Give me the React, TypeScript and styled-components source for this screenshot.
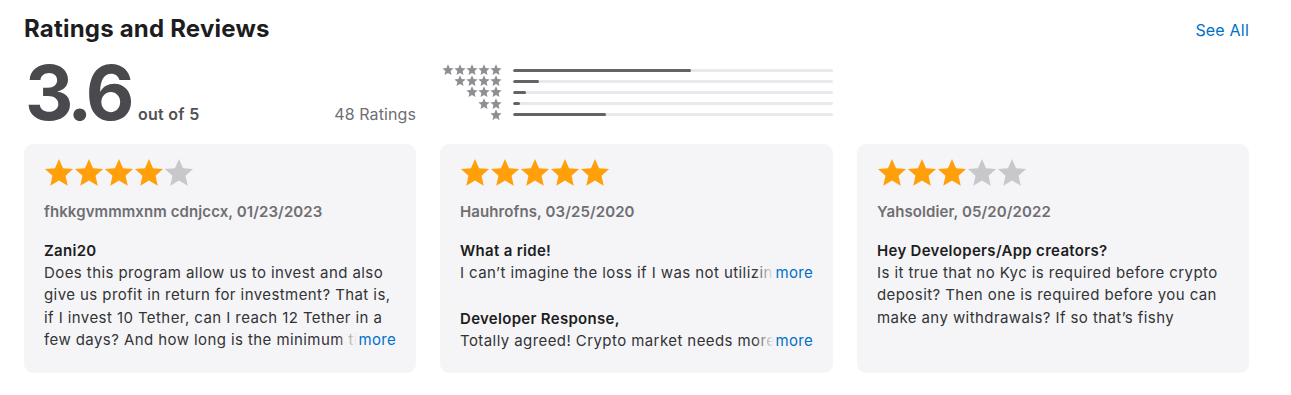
import styled, { createGlobalStyle } from "styled-components";

const GlobalStyle = createGlobalStyle`
  body {
    margin: 0;
    background: #fff;
    font-family: Inter, "Noto Sans", "Liberation Sans", sans-serif;
    -webkit-font-smoothing: antialiased;
  }
`;

const Section = styled.section`
  width: 1225px;
  padding: 13px 0 0 24px;
  display: flex;
  flex-direction: column;
`;

const Header = styled.div`
  display: flex;
  justify-content: space-between;
  align-items: center;
  height: 32px;
`;

const Title = styled.h2`
  margin: 0;
  font-size: 24px;
  line-height: 32px;
  font-weight: 700;
  color: #1d1d1f;
  letter-spacing: 0.2px;
`;

const SeeAll = styled.a`
  font-size: 16px;
  color: #0070c9;
  text-decoration: none;
  cursor: pointer;
  letter-spacing: 0.2px;
  margin-top: 2px;
`;

const Summary = styled.div`
  display: grid;
  grid-template-columns: 392px 393px;
  gap: 24px;
  margin-top: 18px;
  height: 81px;
`;

const Score = styled.div`
  display: flex;
  align-items: flex-end;
  justify-content: space-between;
  padding-bottom: 20px;
`;

const ScoreMain = styled.div`
  display: flex;
  align-items: baseline;
`;

const Big = styled.span`
  font-size: 75px;
  line-height: 60px;
  font-weight: 700;
  color: #4a4a4e;
  letter-spacing: -4.5px;
  margin-left: 1px;
`;

const OutOf = styled.span`
  font-size: 16px;
  font-weight: 600;
  color: #515154;
  margin-left: 8px;
  letter-spacing: 0.3px;
`;

const Count = styled.span`
  font-size: 16px;
  color: #6e6e73;
  letter-spacing: 0.1px;
`;

const Histogram = styled.div`
  display: flex;
  flex-direction: column;
  padding-top: 1px;
`;

const HistRow = styled.div`
  display: grid;
  grid-template-columns: 62px 1fr;
  gap: 11px;
  align-items: center;
  height: 11.2px;
`;

const MiniStars = styled.div`
  display: flex;
  justify-content: flex-end;
  line-height: 0;
`;

const Track = styled.div`
  height: 3px;
  border-radius: 2px;
  background: #e8e8ed;
  overflow: hidden;
`;

const Fill = styled.div`
  height: 100%;
  border-radius: 2px;
  background: #636366;
`;

const Cards = styled.div`
  display: grid;
  grid-template-columns: 392px 393px 392px;
  gap: 24px;
`;

const Card = styled.article`
  height: 229px;
  box-sizing: border-box;
  background: #f5f5f7;
  border-radius: 9px;
  padding: 14px 20px 0 20px;
  display: flex;
  flex-direction: column;
`;

const StarRow = styled.div`
  display: flex;
  line-height: 0;
`;

const Author = styled.div`
  margin-top: 14px;
  font-size: 15px;
  font-weight: 600;
  color: #6e6e73;
  letter-spacing: 0.1px;
`;

const Block = styled.div<{ $gap: number }>`
  margin-top: ${(p) => p.$gap}px;
`;

const ReviewTitle = styled.div`
  font-size: 15px;
  font-weight: 600;
  color: #1d1d1f;
  line-height: 22px;
  letter-spacing: 0.3px;
`;

const BodyWrap = styled.div`
  position: relative;
`;

const Body = styled.p<{ $lines: number }>`
  margin: 0;
  font-size: 15px;
  line-height: 22.4px;
  letter-spacing: 0.42px;
  color: #333336;
  display: -webkit-box;
  -webkit-box-orient: vertical;
  -webkit-line-clamp: ${(p) => p.$lines};
  overflow: hidden;
`;

const More = styled.a`
  position: absolute;
  right: 0;
  bottom: 0;
  font-size: 15px;
  line-height: 22.4px;
  letter-spacing: 0.3px;
  color: #0070c9;
  padding-left: 22px;
  background: linear-gradient(to right, rgba(245, 245, 247, 0), #f5f5f7 20px);
  cursor: pointer;
`;

const STAR =
  "M12 1.2l3.1 7.1 7.7.7-5.8 5.1 1.7 7.6L12 17.7l-6.7 4 1.7-7.6L1.2 9l7.7-.7z";

const Star = ({ size, color }: { size: number; color: string }) => (
  <svg width={size} height={size} viewBox="0.5 0.5 23 23">
    <path d={STAR} fill={color} />
  </svg>
);

const histogram = [55.5, 8, 4, 2.2, 29];

const reviews = [
  {
    stars: 4,
    author: "fhkkgvmmmxnm cdnjccx, 01/23/2023",
    title: "Zani20",
    body: "Does this program allow us to invest and also give us profit in return for investment? That is, if I invest 10 Tether, can I reach 12 Tether in a few days? And how long is the minimum time for withdrawal of profit from investment?",
    lines: 4,
    more: true,
  },
  {
    stars: 5,
    author: "Hauhrofns, 03/25/2020",
    title: "What a ride!",
    body: "I can’t imagine the loss if I was not utilizing this app during the crash, it saved me a fortune.",
    lines: 1,
    more: true,
    response:
      "Totally agreed! Crypto market needs more reliable tools like this one and we will keep improving.",
  },
  {
    stars: 3,
    author: "Yahsoldier, 05/20/2022",
    title: "Hey Developers/App creators?",
    body: "Is it true that no Kyc is required before crypto deposit? Then one is required before you can make any withdrawals? If so that’s fishy",
    lines: 4,
    more: false,
  },
];

export default function App() {
  return (
    <>
      <GlobalStyle />
      <Section>
        <Header>
          <Title>Ratings and Reviews</Title>
          <SeeAll>See All</SeeAll>
        </Header>
        <Summary>
          <Score>
            <ScoreMain>
              <Big>3.6</Big>
              <OutOf>out of 5</OutOf>
            </ScoreMain>
            <Count>48 Ratings</Count>
          </Score>
          <Histogram>
            {histogram.map((pct, i) => (
              <HistRow key={i}>
                <MiniStars>
                  {Array.from({ length: 5 - i }).map((_, j) => (
                    <Star key={j} size={12} color="#8e8e93" />
                  ))}
                </MiniStars>
                <Track>
                  <Fill style={{ width: `${pct}%` }} />
                </Track>
              </HistRow>
            ))}
          </Histogram>
        </Summary>
        <Cards>
          {reviews.map((r) => (
            <Card key={r.author}>
              <StarRow>
                {Array.from({ length: 5 }).map((_, j) => (
                  <Star
                    key={j}
                    size={30}
                    color={j < r.stars ? "#ff9f0a" : "#c7c7cc"}
                  />
                ))}
              </StarRow>
              <Author>{r.author}</Author>
              <Block $gap={19}>
                <ReviewTitle>{r.title}</ReviewTitle>
                <BodyWrap>
                  <Body $lines={r.lines}>{r.body}</Body>
                  {r.more && <More>more</More>}
                </BodyWrap>
              </Block>
              {r.response && (
                <Block $gap={24}>
                  <ReviewTitle>Developer Response,</ReviewTitle>
                  <BodyWrap>
                    <Body $lines={1}>{r.response}</Body>
                    <More>more</More>
                  </BodyWrap>
                </Block>
              )}
            </Card>
          ))}
        </Cards>
      </Section>
    </>
  );
}
